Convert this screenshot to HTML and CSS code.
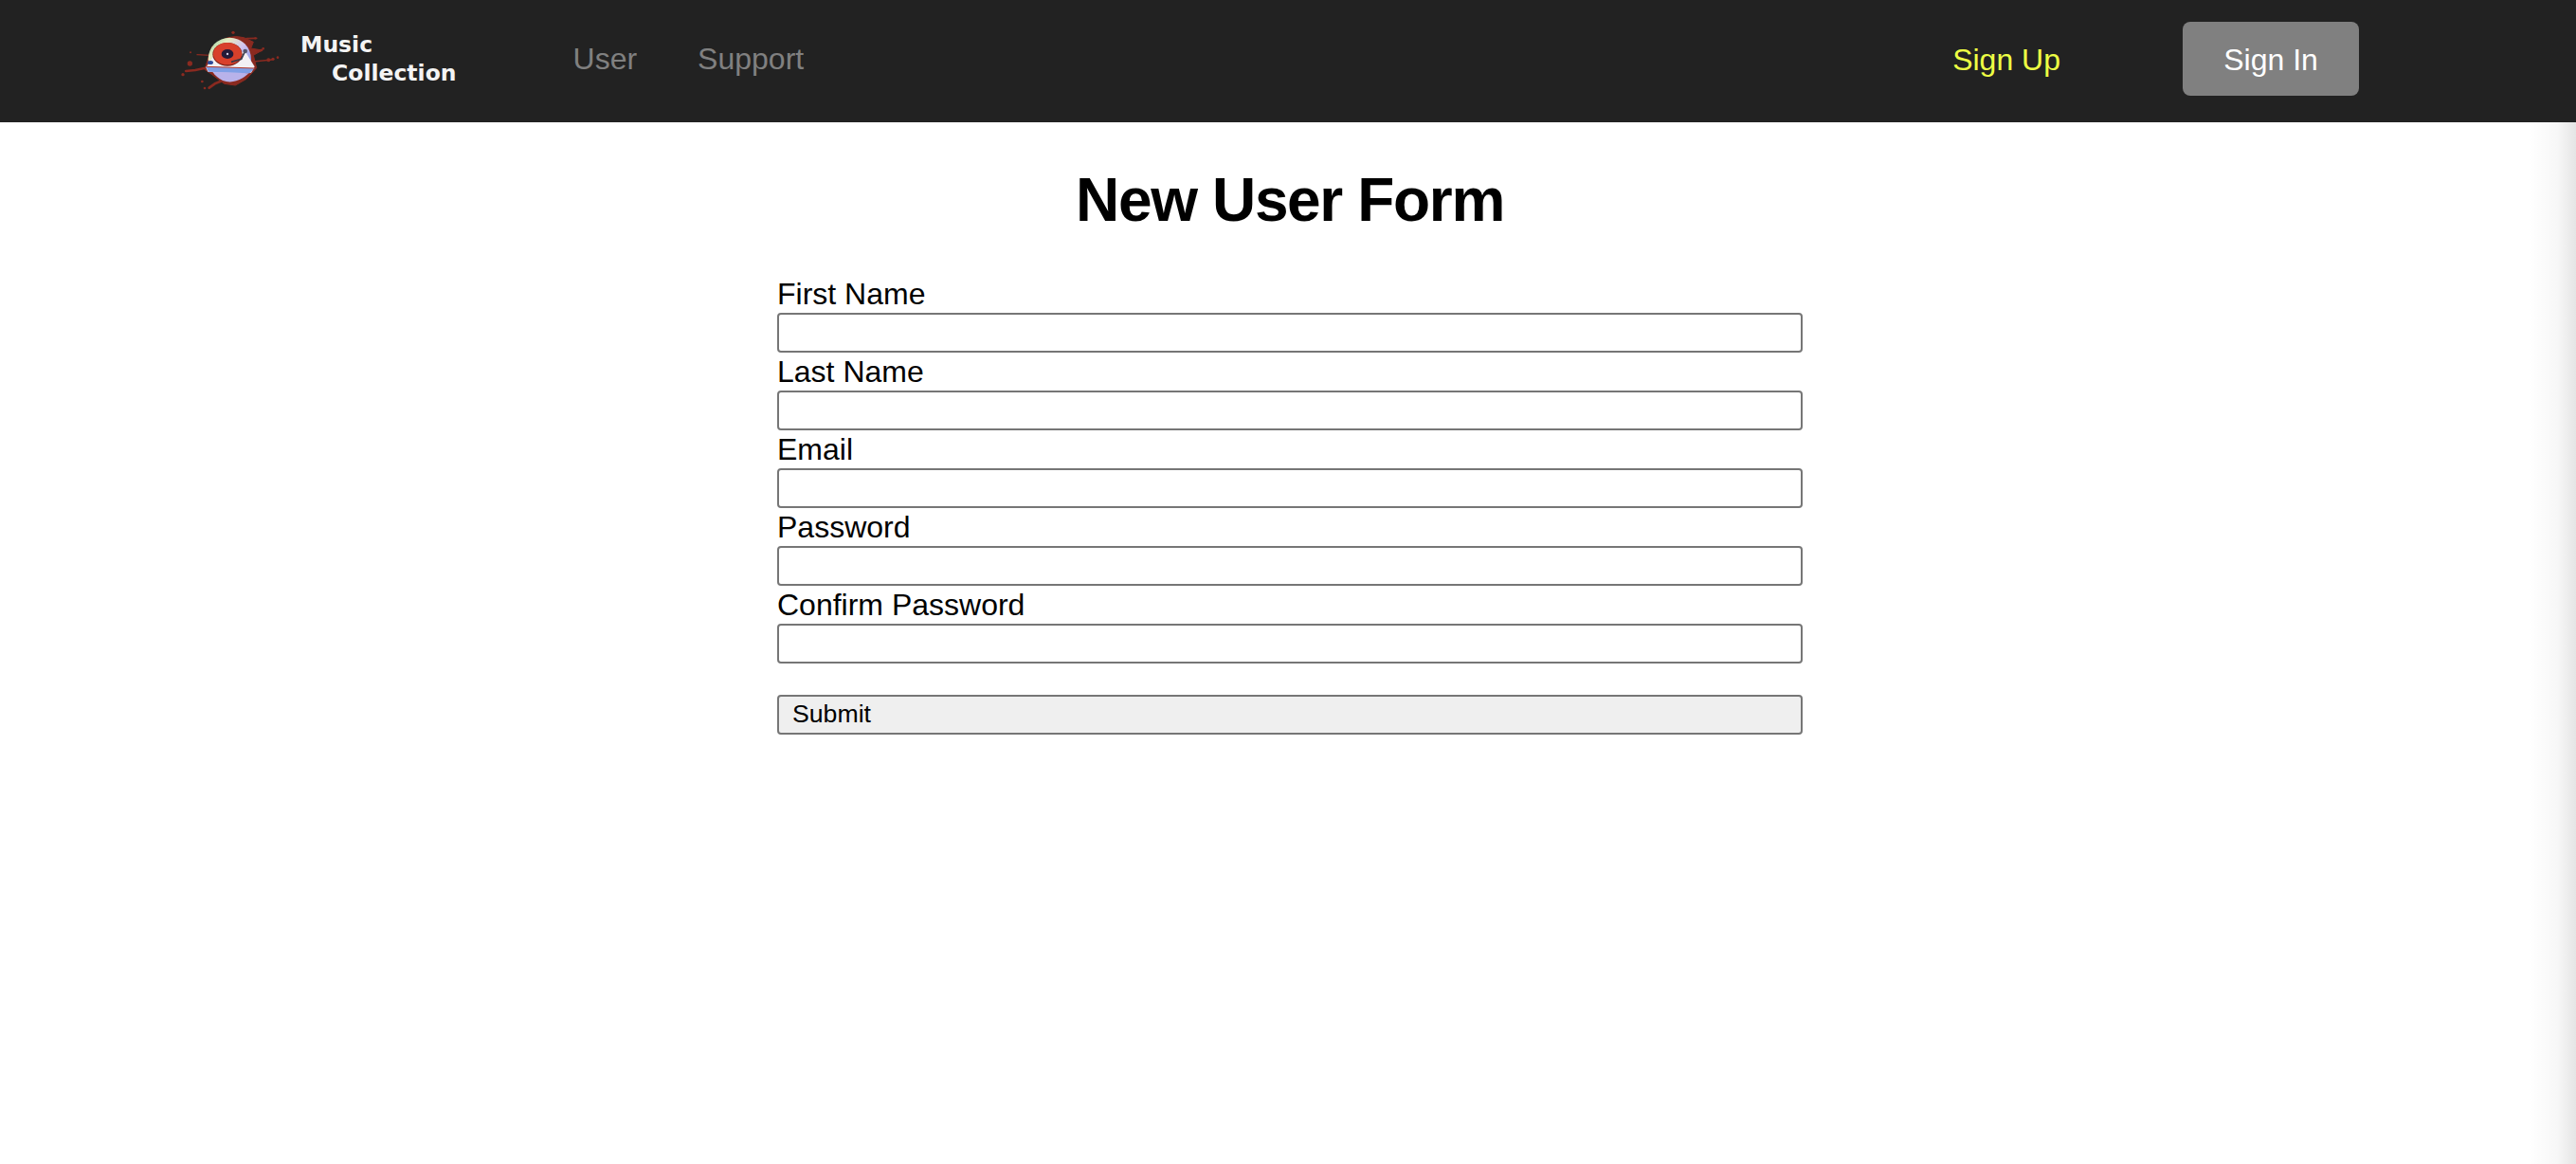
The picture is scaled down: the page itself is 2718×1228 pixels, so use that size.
FILE: index.html
```html
<!DOCTYPE html>
<html lang="en">
<head>
<meta charset="utf-8">
<title>New User Form</title>
<link rel="stylesheet" href="styles.css">
</head>
<body>
<header class="topbar">
  <a class="brand" href="#">
    <svg class="brand-logo" viewBox="0 0 360 225" width="120" height="75" aria-hidden="true">
      <defs>
        <linearGradient id="cd" x1="0" y1="0" x2="1" y2="1">
          <stop offset="0" stop-color="#7fc79a"/>
          <stop offset=".25" stop-color="#e6ecc0"/>
          <stop offset=".5" stop-color="#d3c4ee"/>
          <stop offset=".75" stop-color="#8f9be8"/>
          <stop offset="1" stop-color="#6a7ed8"/>
        </linearGradient>
      </defs>
      <g fill="#8a2a20" stroke="#8a2a20" stroke-linecap="round" stroke-linejoin="round">
        <path d="M132 72 Q180 30 232 44 L262 58 L254 78 L290 84 L262 100 L272 140 L240 175 L205 195 L170 190 L130 160 L108 145 L122 100 Z" stroke-width="3"/>
        <circle cx="61" cy="126" r="8" stroke="none"/>
        <circle cx="198" cy="28" r="5" stroke="none"/>
        <circle cx="324" cy="112" r="5" stroke="none"/>
        <circle cx="310" cy="115" r="6" stroke="none"/>
        <circle cx="339" cy="107" r="4" stroke="none"/>
        <circle cx="39" cy="161" r="5" stroke="none"/>
        <circle cx="100" cy="183" r="4" stroke="none"/>
        <circle cx="108" cy="204" r="4" stroke="none"/>
        <circle cx="63" cy="91" r="3" stroke="none"/>
        <circle cx="293" cy="79" r="4" stroke="none"/>
        <circle cx="268" cy="46" r="3.5" stroke="none"/>
        <path d="M48 150 L78 147 L120 138" stroke-width="7" fill="none"/>
        <path d="M84 98 L125 100" stroke-width="4" fill="none"/>
        <path d="M122 203 L140 190 L170 178" stroke-width="8" fill="none"/>
        <path d="M262 120 L320 114" stroke-width="5" fill="none"/>
        <path d="M240 47 L272 46" stroke-width="5" fill="none"/>
        <path d="M255 88 L288 84" stroke-width="8" fill="none"/>
      </g>
      <circle cx="187" cy="112" r="68" fill="url(#cd)"/>
      <path d="M112 138 L138 100 L236 88 L266 136 L255 155 L118 152 Z" fill="#f3f0f4"/>
      <path d="M112 136 L266 141 L250 157 L120 152 Z" fill="#7f9fe6"/>
      <path d="M114 136 L264 141" stroke="#b5392a" stroke-width="3" fill="none"/>
      <path d="M135 153 L248 157 Q205 195 165 180 Q145 170 135 153 Z" fill="#b8b2ea"/>
      <ellipse cx="180" cy="97" rx="47" ry="37" fill="#7a2018"/>
      <ellipse cx="180" cy="95" rx="45" ry="35" fill="#d8402b"/>
      <ellipse cx="180" cy="96" rx="19" ry="15" fill="#241a38"/>
      <circle cx="180" cy="96" r="3.5" fill="#d9d4e8"/>
      <ellipse cx="126" cy="123" rx="9" ry="6" fill="#2e4a9a"/>
      <path d="M236 86 L224 112 L192 121" stroke="#3a3a48" stroke-width="5" fill="none"/>
      <circle cx="236" cy="87" r="7" fill="#55556a"/>
    </svg>
    <span class="brand-name"><span class="brand-line">Music</span><span class="brand-line brand-line-indent">Collection</span></span>
  </a>
  <nav class="main-nav">
    <a class="nav-link" href="#">User</a>
    <a class="nav-link" href="#">Support</a>
  </nav>
  <div class="account">
    <a class="signup" href="#">Sign Up</a>
    <button class="signin" type="button">Sign In</button>
  </div>
</header>
<main class="content">
  <h1 class="title">New User Form</h1>
  <form class="user-form">
    <label class="field-label" for="first">First Name</label>
    <input class="field" id="first" type="text">
    <label class="field-label" for="last">Last Name</label>
    <input class="field" id="last" type="text">
    <label class="field-label" for="email">Email</label>
    <input class="field" id="email" type="text">
    <label class="field-label" for="password">Password</label>
    <input class="field" id="password" type="password">
    <label class="field-label" for="confirm">Confirm Password</label>
    <input class="field" id="confirm" type="password">
    <button class="submit" type="submit">Submit</button>
  </form>
</main>
<div class="edge-shadow"></div>
</body>
</html>
```
FILE: styles.css
```css
* { box-sizing: border-box; }
html, body { height: 100%; }
body {
  margin: 0;
  background: #fff;
  color: #000;
  font-family: "Liberation Sans", Arial, sans-serif;
  overflow: hidden;
  position: relative;
}
a { text-decoration: none; }

.topbar {
  display: flex;
  align-items: center;
  height: 129px;
  padding: 23px 229px 28px 180px;
  background: #222;
}
.brand { display: flex; align-items: center; }
.brand-logo { display: block; flex: none; }
.brand-name {
  display: flex;
  flex-direction: column;
  margin-left: 17px;
  font-family: "DejaVu Sans", sans-serif;
  font-weight: 700;
  font-size: 23.5px;
  line-height: 30px;
  color: #f4f4f4;
}
.brand-line-indent { padding-left: 33px; }

.main-nav {
  display: flex;
  gap: 64px;
  margin-left: 123px;
}
.nav-link { font-size: 32px; color: #808080; }

.account {
  display: flex;
  align-items: center;
  margin-left: auto;
}
.signup { font-size: 32px; color: #eeff44; margin-right: 129px; padding-top: 2px; }
.signin {
  width: 186px;
  height: 78px;
  padding: 2px 0 0;
  border: 0;
  border-radius: 8px;
  background: #808080;
  color: #fff;
  font: 32px "Liberation Sans", Arial, sans-serif;
}

.content { padding-left: 4px; }
.title {
  margin: 0;
  padding-top: 43px;
  font-family: "Liberation Sans", Arial, sans-serif;
  font-size: 64px;
  font-weight: 700;
  letter-spacing: -1.35px;
  line-height: 78px;
  text-align: center;
}
.user-form {
  display: flex;
  flex-direction: column;
  width: 1082px;
  margin: 40px auto 0;
}
.field-label {
  font-size: 32px;
  line-height: 40px;
  height: 40px;
}
.field {
  display: block;
  width: 100%;
  height: 42px;
  margin: 0;
  padding: 2px 4px;
  border: 2px solid #767676;
  border-radius: 4px;
  background: #fff;
}
.submit {
  width: 100%;
  height: 42px;
  margin-top: 33px;
  padding: 0 14px 2px;
  border: 2px solid #767676;
  border-radius: 4px;
  background: #efefef;
  color: #000;
  font: 26.67px "Liberation Sans", Arial, sans-serif;
  text-align: left;
}
.edge-shadow {
  position: absolute;
  top: 129px;
  right: 0;
  bottom: 0;
  width: 50px;
  background: linear-gradient(to right, rgba(0,0,0,0), rgba(0,0,0,.03) 60%, rgba(0,0,0,.1));
}
```
